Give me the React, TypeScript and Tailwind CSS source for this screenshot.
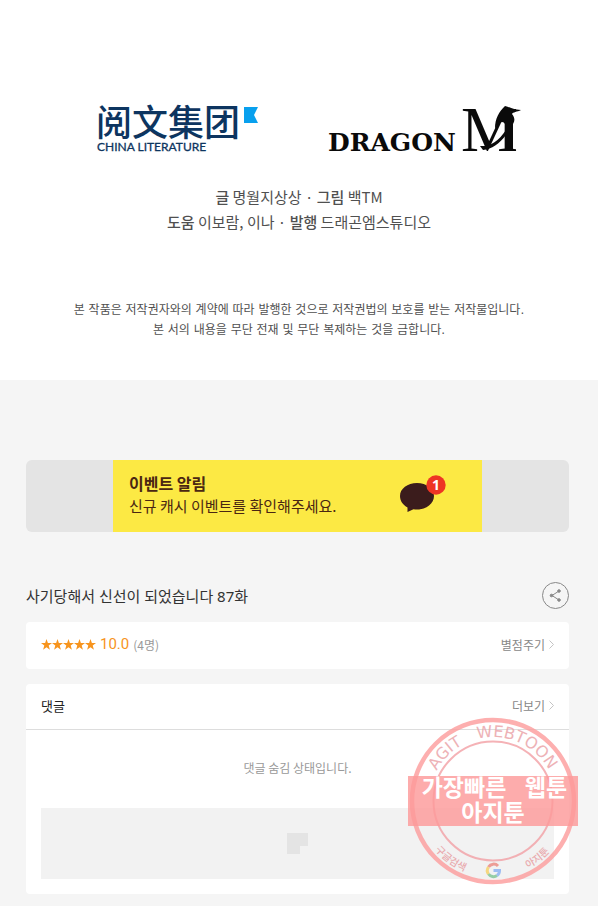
import type { ReactNode } from "react";

function ChinaLiteratureLogo() {
  return (
    <svg className="overflow-visible" width="164" height="52" viewBox="0 0 164 52" role="img" aria-label="阅文集团 China Literature">
      <text x="-1" y="32" fontSize="36" fontWeight="500" fill="#0d3560" fontFamily="'Noto Sans CJK SC', sans-serif">
        阅文集团
      </text>
      <text x="0" y="47" fontSize="12" fontWeight="400" fill="#0d3560" stroke="#0d3560" strokeWidth="0.3" fontFamily="Lato, sans-serif">
        CHINA LITERATURE
      </text>
      <path d="M147 3h14l-4 8 4 8h-14z" fill="#08a0ee" />
    </svg>
  );
}

function DragonLogo() {
  return (
    <svg className="overflow-visible" width="196" height="54" viewBox="0 0 196 54" role="img" aria-label="Dragon M">
      <text x="-1" y="47" fontSize="25" fontWeight="700" fill="#0a0a0a" fontFamily="'DejaVu Serif', serif">
        DRAGON
      </text>
      <text x="132" y="47" fontSize="64" fill="#0a0a0a" fontFamily="'Liberation Serif', serif">
        M
      </text>
      <path
        d="M166 25C166 14 170 8 176 2C181 3 184 6 192 6C188 8 184 8 183 10C186 14 186 17 184 20V46H176V20C174 16 169 18 166 25Z"
        fill="#0a0a0a"
      />
      <path d="M151 42C160 43 169 38 177 26V31C170 40 163 45 154 46Z" fill="#0a0a0a" />
    </svg>
  );
}

function Star() {
  return (
    <svg width="11" height="11" viewBox="0 0 24 24" fill="#f7941d" aria-hidden="true">
      <path d="M12 0l3 8.6 9 .2-7.200 5.600 2.600 8.800L12 18l-7.400 5.200 2.600-8.800L0 8.800l9-.2z" />
    </svg>
  );
}

function MoreButton({ children }: { children: ReactNode }) {
  return (
    <button type="button" className="flex items-center gap-1 text-xs text-[#888]">
      {children}
      <svg width="5" height="9" viewBox="0 0 5 9" fill="none" stroke="#c4c4c4" aria-hidden="true">
        <path d="M.5.5l4 4-4 4" />
      </svg>
    </button>
  );
}

function Banner() {
  return (
    <a href="#event" className="flex h-[72px] justify-center overflow-hidden rounded-md bg-[#e4e4e4]">
      <div className="flex w-[369px] items-center justify-between bg-[#fce944] pr-9 pb-1 pl-4 text-[#4a2612]">
        <div>
          <p className="text-base leading-6 font-bold">이벤트 알림</p>
          <p className="text-[15px] leading-[22px]">신규 캐시 이벤트를 확인해주세요.</p>
        </div>
        <svg width="48" height="42" viewBox="0 0 48 42" aria-hidden="true">
          <path
            d="M19 10C9.500 10 2 15.600 2 23c0 5 3 9 7.500 11.400L9.500 39l6-2.800c1.100.2 2.300.3 3.500.3 9.500 0 17-6 17-13.500S28.500 10 19 10z"
            fill="#3b1c1c"
          />
          <circle cx="38" cy="12" r="9.700" fill="#ee3524" />
          <text x="38" y="17" textAnchor="middle" fontSize="14" fontWeight="700" fill="#fff" fontFamily="'Open Sans', sans-serif">
            1
          </text>
        </svg>
      </div>
    </a>
  );
}

function Stamp() {
  return (
    <svg
      className="pointer-events-none absolute top-8 -right-[9px]"
      width="170"
      height="170"
      viewBox="0 0 170 170"
      fontFamily="'Noto Sans CJK KR', sans-serif"
      aria-label="AGIT WEBTOON"
      role="img"
    >
      <defs>
        <path id="stamp-top" d="M21 85a64 64 0 0 1 128 0" />
        <path id="stamp-bottom" d="M9 85a76 76 0 0 0 152 0" />
      </defs>
      <g opacity="0.8">
        <circle cx="85" cy="85" r="81" fill="none" stroke="#fd9c9c" strokeWidth="4.500" />
        <circle cx="85" cy="85" r="59.500" fill="none" stroke="#f3a0a5" strokeWidth="2" />
        <g fontSize="16" fill="#eaa0a5" fontFamily="'DejaVu Sans', sans-serif" textAnchor="middle">
          <text>
            <textPath href="#stamp-top" startOffset="25%">
              AGIT
            </textPath>
          </text>
          <text>
            <textPath href="#stamp-top" startOffset="63%">
              WEBTOON
            </textPath>
          </text>
        </g>
        <g fontSize="10" fontWeight="500" fill="#e8989d" textAnchor="middle">
          <text>
            <textPath href="#stamp-bottom" startOffset="30%">
              구글검색
            </textPath>
          </text>
          <text>
            <textPath href="#stamp-bottom" startOffset="71%">
              아지툰
            </textPath>
          </text>
        </g>
        <g fill="none" strokeWidth="3" opacity="0.600">
          <path d="M90 150a6 6 0 0 0-9.500 1" stroke="#ea4335" />
          <path d="M80.500 151a6 6 0 0 0 0 7" stroke="#fbbc05" />
          <path d="M80.500 158a6 6 0 0 0 8.500 1.500" stroke="#34a853" />
          <path d="M89 159.500a6 6 0 0 0 2.500-5h-6" stroke="#4285f4" />
        </g>
      </g>
      <path d="M0 60h170v50H0z" fill="#fd9a9a" opacity="0.820" />
      <g fill="#fff" fontSize="23" fontWeight="700" textAnchor="middle">
        <text x="56" y="80">
          가장빠른
        </text>
        <text x="138" y="80">
          웹툰
        </text>
        <text x="85" y="105">
          아지툰
        </text>
      </g>
    </svg>
  );
}

export default function App() {
  return (
    <main className="min-h-screen bg-[#f5f5f5] pb-3 font-['Noto_Sans_CJK_KR',sans-serif]">
      <section className="bg-white px-4 pt-[104px] pb-10 text-center text-[#505050]">
        <div className="flex items-start justify-center gap-[68px] pl-6">
          <ChinaLiteratureLogo />
          <DragonLogo />
        </div>
        <div className="mt-[26px] text-[15px] leading-[25px]">
          <p>
            <b className="font-medium">글</b> 명월지상상 · <b className="font-medium">그림</b> 백TM
          </p>
          <p>
            <b className="font-medium">도움</b> 이보람, 이나 · <b className="font-medium">발행</b> 드래곤엠스튜디오
          </p>
        </div>
        <div className="mt-[66px] font-['DejaVu_Sans','Noto_Sans_CJK_KR',sans-serif] text-xs leading-5">
          <p>본 작품은 저작권자와의 계약에 따라 발행한 것으로 저작권법의 보호를 받는 저작물입니다.</p>
          <p>본 서의 내용을 무단 전재 및 무단 복제하는 것을 금합니다.</p>
        </div>
      </section>

      <div className="pt-20 pr-[29px] pl-[26px]">
        <Banner />

        <div className="mt-[50px] flex items-center justify-between">
          <h1 className="font-['Noto_Sans','Noto_Sans_CJK_KR',sans-serif] text-[15px] leading-6 text-[#333]">
            사기당해서 신선이 되었습니다 87화
          </h1>
          <button
            type="button"
            aria-label="공유"
            className="flex size-[27px] items-center justify-center rounded-full border border-[#888]"
          >
            <svg width="13" height="13" viewBox="0 0 13 13" fill="#888" stroke="#888" aria-hidden="true">
              <path d="M10 2L3 6.500l7 4.500" fill="none" />
              <circle cx="10" cy="2" r="1.300" />
              <circle cx="2.500" cy="6.500" r="1.300" />
              <circle cx="10" cy="11" r="1.300" />
            </svg>
          </button>
        </div>

        <section className="mt-[13px] flex h-[47px] items-center justify-between rounded-sm bg-white px-[15px] pb-0.5">
          <div className="flex items-center gap-1">
            <span className="flex">
              <Star />
              <Star />
              <Star />
              <Star />
              <Star />
            </span>
            <span className="font-[Roboto,sans-serif] text-[15px] text-[#f7941d]">10.0</span>
            <span className="text-xs text-[#999]">(4명)</span>
          </div>
          <MoreButton>별점주기</MoreButton>
        </section>

        <section className="relative mt-[15px] rounded-sm bg-white pb-[15px]">
          <header className="flex h-[46px] items-center justify-between border-b border-[#ddd] px-[15px] pb-0.5">
            <h2 className="text-[13px] text-[#222]">댓글</h2>
            <MoreButton>더보기</MoreButton>
          </header>
          <p className="pt-7 pb-[30px] text-center text-xs leading-5 text-[#999]">댓글 숨김 상태입니다.</p>
          <div className="mx-[15px] flex h-[71px] items-center justify-center bg-[#f2f2f2]">
            <svg width="21" height="21" viewBox="0 0 21 21" fill="#e4e4e4" aria-hidden="true">
              <path d="M0 0h21v13h-8v8H0z" />
            </svg>
          </div>
          <Stamp />
        </section>
      </div>
    </main>
  );
}
